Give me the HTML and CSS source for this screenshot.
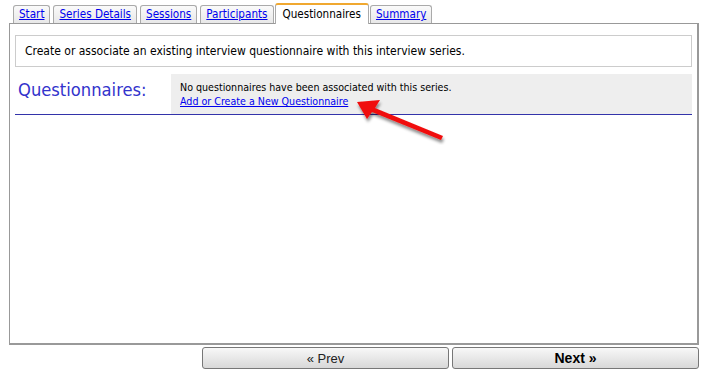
FILE: index.html
```html
<!DOCTYPE html>
<html lang="en">
<head>
  <meta charset="UTF-8" />
  <title>Interview Series - Questionnaires</title>
  <link rel="stylesheet" href="styles.css">
</head>
<body>
  <div class="wizard">
    <!-- tabs -->
    <ul class="tabs">
      <li class="tab"><a href="#">Start</a></li>
      <li class="tab"><a href="#">Series Details</a></li>
      <li class="tab"><a href="#">Sessions</a></li>
      <li class="tab"><a href="#">Participants</a></li>
      <li class="tab active"><span>Questionnaires</span></li>
      <li class="tab"><a href="#">Summary</a></li>
    </ul>

    <!-- panel -->
    <div class="panel">
      <div class="intro">Create or associate an existing interview questionnaire with this interview series.</div>
      <div class="section">
        <h2 class="section-title">Questionnaires:</h2>
        <div class="section-body">
          <div>No questionnaires have been associated with this series.</div>
          <a href="#">Add or Create a New Questionnaire</a>
        </div>
      </div>
    </div>

    <div class="nav-buttons">
      <button class="nav-button">&laquo; Prev</button>
      <button class="nav-button next">Next &raquo;</button>
    </div>

    <!-- callout arrow -->
    <svg class="arrow" width="100" height="50" viewBox="0 0 100 50">
      <defs>
        <filter id="shadow" x="-20%" y="-20%" width="140%" height="160%">
          <feDropShadow dx="1" dy="3" stdDeviation="1.5" flood-color="#000" flood-opacity="0.45" />
        </filter>
      </defs>
      <g filter="url(#shadow)" fill="#f01010">
        <polygon points="7,7 30,5 25,13 93,41 91,45 22,17 17,24" />
      </g>
    </svg>
  </div>
</body>
</html>
```

FILE: styles.css
```css
* {
  box-sizing: border-box;
  margin: 0;
  padding: 0;
}
body {
  font-family: "DejaVu Sans Condensed", "DejaVu Sans", sans-serif;
  font-size: 12px;
  color: #000;
  background: #fff;
}
.wizard {
  position: relative;
  width: 708px;
  height: 377px;
  padding: 3px 0 0 9px;
}
.tabs {
  list-style: none;
  display: flex;
  align-items: flex-end;
  gap: 3px;
  padding-left: 4px;
  height: 20px;
  font-size: 11.6px;
}
.tab {
  height: 18px;
  padding: 0 5px;
  border: 1px solid #aaa;
  border-bottom: none;
  border-radius: 3px 3px 0 0;
  background: linear-gradient(#fafafa, #e8e8e8);
  line-height: 17px;
}
.tab a {
  color: #0000ee;
}
.tab.active {
  height: 21px;
  margin: 0 -2px -1px -2px;
  padding: 0 7px;
  background: #fff;
  border-top: 2px solid #f0a830;
  line-height: 19px;
  position: relative;
  z-index: 1;
}
.panel {
  height: 322px;
  width: 690px;
  border: 1px solid #999;
  border-right-width: 2px;
  border-bottom-width: 2px;
  padding: 11px 5px 0 5px;
}
.intro {
  height: 32px;
  border: 1px solid #ccc;
  padding: 8px 9px;
}
.section {
  display: flex;
  margin-top: 7px;
  border-bottom: 1px solid #3333aa;
  height: 41px;
}
.section-title {
  width: 156px;
  padding: 5px 0 0 3px;
  font-size: 18.2px;
  font-weight: normal;
  color: #3333cc;
}
.section-body {
  flex: 1;
  background: #eeeeee;
  padding: 6px 9px;
  font-size: 10.6px;
  line-height: 14px;
}
.section-body a {
  color: #0000ee;
}
.nav-buttons {
  display: flex;
  justify-content: flex-end;
  gap: 3px;
  margin-top: 2px;
  width: 690px;
}
.nav-button {
  width: 247px;
  height: 22px;
  border: 1px solid #777;
  border-radius: 3px;
  background: linear-gradient(#f8f8f8, #d8d8d8);
  font-family: "Liberation Sans", Arial, sans-serif;
  font-size: 13px;
  color: #222;
}
.nav-button.next {
  font-weight: bold;
  font-size: 14px;
  color: #000;
}
.arrow {
  position: absolute;
  left: 350px;
  top: 95px;
}
```
